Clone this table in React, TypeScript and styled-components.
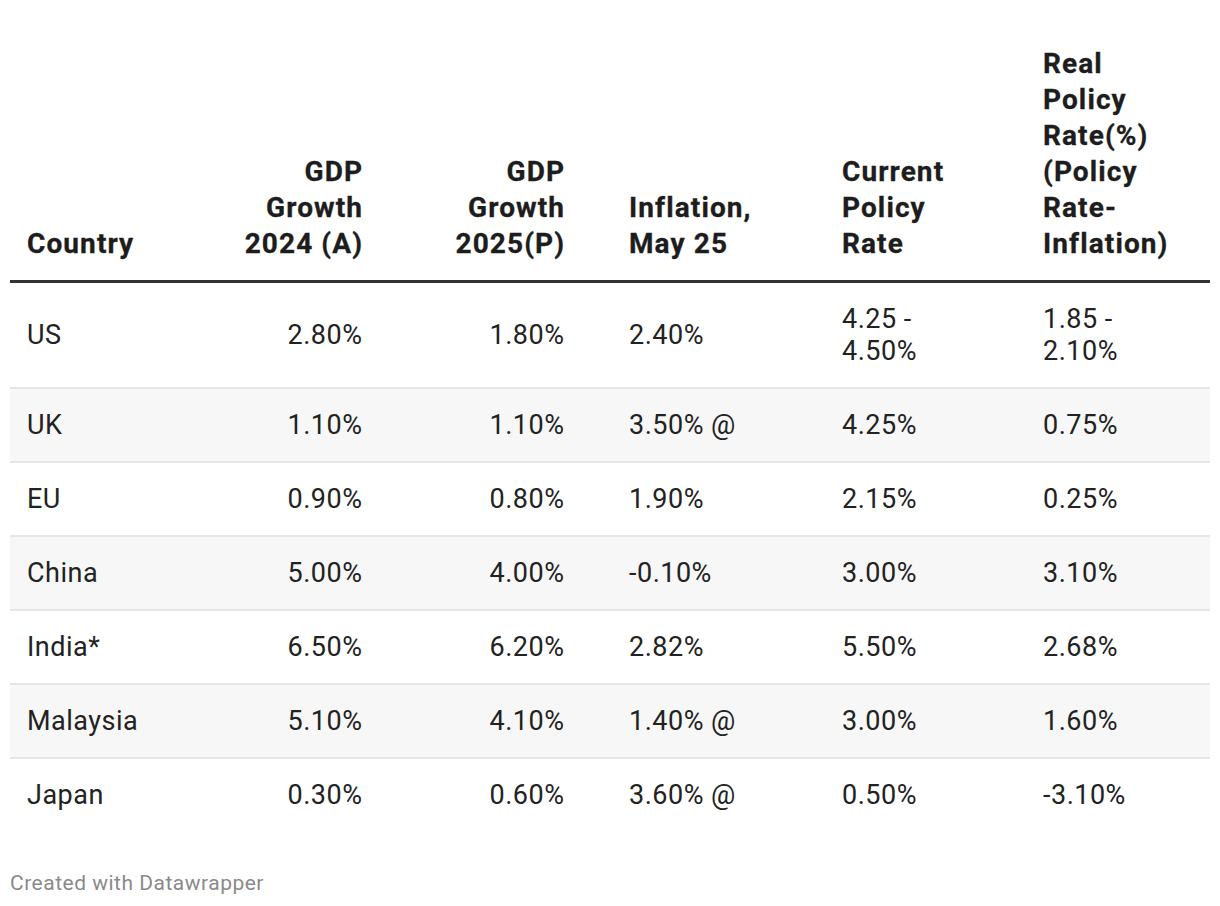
import React from "react";
import styled, { createGlobalStyle } from "styled-components";

const Global = createGlobalStyle`
  html, body { margin: 0; padding: 0; background: #ffffff; }
  body { font-family: Roboto, "Noto Sans", "Liberation Sans", sans-serif; color: #1d1d1d; }
`;

type Align = "left" | "right";
interface Col { width: number; align: Align; padL: number; padR: number; }

const COLS: Col[] = [
  { width: 202, align: "left", padL: 17, padR: 17 },
  { width: 167, align: "right", padL: 17, padR: 17 },
  { width: 233, align: "right", padL: 17, padR: 48 },
  { width: 213, align: "left", padL: 17, padR: 17 },
  { width: 201, align: "left", padL: 17, padR: 17 },
  { width: 184, align: "left", padL: 17, padR: 17 },
];

const template = COLS.map((c) => `${c.width}px`).join(" ");

const HEAD_LS = 1.1;
const BODY_LS = 0.5;

const Page = styled.div`
  width: 1220px;
  height: 906px;
  box-sizing: border-box;
  padding: 46px 10px 0 10px;
  display: flex;
  flex-direction: column;
`;

const Table = styled.div`
  display: flex;
  flex-direction: column;
  width: 1200px;
`;

const HeadRow = styled.div`
  display: grid;
  grid-template-columns: ${template};
  align-items: end;
  border-bottom: 3px solid #333333;
  padding-bottom: 18px;
`;

const BodyRow = styled.div<{ $striped: boolean; $last: boolean }>`
  display: grid;
  grid-template-columns: ${template};
  align-items: center;
  background: ${(p) => (p.$striped ? "#f7f7f7" : "#ffffff")};
  border-bottom: ${(p) => (p.$last ? "none" : "2px solid #e6e6e6")};
  padding: 20px 0;
`;

const HeadCell = styled.div<{ $align: Align; $pl: number; $pr: number }>`
  text-align: ${(p) => p.$align};
  padding: 0 ${(p) => p.$pr - (p.$align === "right" ? HEAD_LS : 0)}px 0 ${(p) => p.$pl}px;
  font-size: 28px;
  line-height: 36px;
  font-weight: 700;
  letter-spacing: ${HEAD_LS}px;
  -webkit-text-stroke: 0.3px #1d1d1d;
  color: #1d1d1d;
  white-space: nowrap;
`;

const Cell = styled.div<{ $align: Align; $pl: number; $pr: number }>`
  text-align: ${(p) => p.$align};
  padding: 0 ${(p) => p.$pr - (p.$align === "right" ? BODY_LS : 0)}px 0 ${(p) => p.$pl}px;
  font-size: 27px;
  line-height: 32px;
  font-weight: 400;
  letter-spacing: ${BODY_LS}px;
  color: #222222;
  white-space: nowrap;
`;

const Footer = styled.div`
  margin-top: 40px;
  font-size: 21px;
  line-height: 24px;
  letter-spacing: 0.5px;
  color: #8a8a8a;
  padding-left: 0;
`;

const HEAD: string[][] = [
  ["Country"],
  ["GDP", "Growth", "2024 (A)"],
  ["GDP", "Growth", "2025(P)"],
  ["Inflation,", "May 25"],
  ["Current", "Policy", "Rate"],
  ["Real", "Policy", "Rate(%)", "(Policy", "Rate-", "Inflation)"],
];

const ROWS: string[][][] = [
  [["US"], ["2.80%"], ["1.80%"], ["2.40%"], ["4.25 -", "4.50%"], ["1.85 -", "2.10%"]],
  [["UK"], ["1.10%"], ["1.10%"], ["3.50% @"], ["4.25%"], ["0.75%"]],
  [["EU"], ["0.90%"], ["0.80%"], ["1.90%"], ["2.15%"], ["0.25%"]],
  [["China"], ["5.00%"], ["4.00%"], ["-0.10%"], ["3.00%"], ["3.10%"]],
  [["India*"], ["6.50%"], ["6.20%"], ["2.82%"], ["5.50%"], ["2.68%"]],
  [["Malaysia"], ["5.10%"], ["4.10%"], ["1.40% @"], ["3.00%"], ["1.60%"]],
  [["Japan"], ["0.30%"], ["0.60%"], ["3.60% @"], ["0.50%"], ["-3.10%"]],
];

const Lines: React.FC<{ lines: string[] }> = ({ lines }) => (
  <>
    {lines.map((l, i) => (
      <React.Fragment key={i}>
        {i > 0 && <br />}
        {l}
      </React.Fragment>
    ))}
  </>
);

export default function App() {
  return (
    <>
      <Global />
      <Page>
        <Table>
          <HeadRow>
            {HEAD.map((h, i) => (
              <HeadCell key={i} $align={COLS[i].align} $pl={COLS[i].padL} $pr={COLS[i].padR}>
                <Lines lines={h} />
              </HeadCell>
            ))}
          </HeadRow>
          {ROWS.map((r, ri) => (
            <BodyRow key={ri} $striped={ri % 2 === 1} $last={ri === ROWS.length - 1}>
              {r.map((c, ci) => (
                <Cell key={ci} $align={COLS[ci].align} $pl={COLS[ci].padL} $pr={COLS[ci].padR}>
                  <Lines lines={c} />
                </Cell>
              ))}
            </BodyRow>
          ))}
        </Table>
        <Footer>Created with Datawrapper</Footer>
      </Page>
    </>
  );
}
